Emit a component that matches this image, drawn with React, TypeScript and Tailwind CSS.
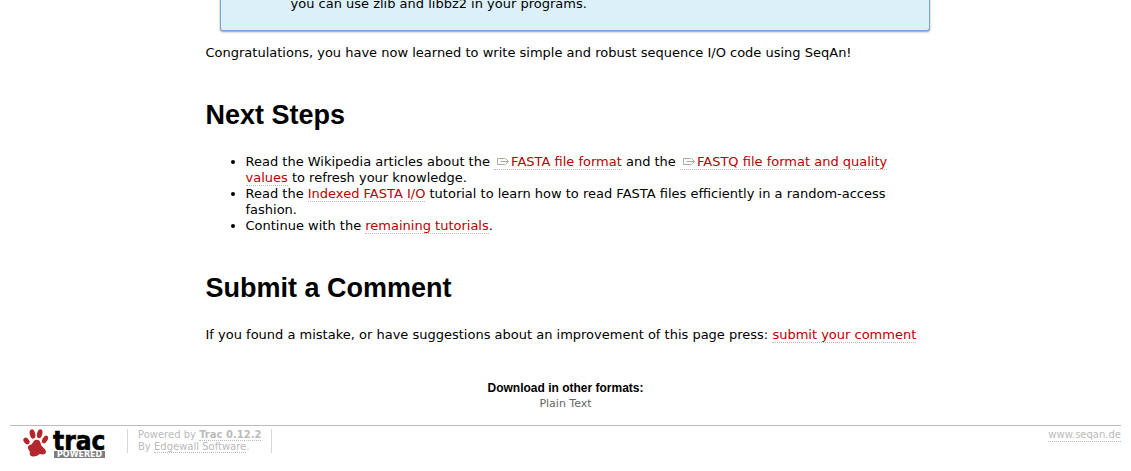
import type { ReactNode } from "react";

function WikiLink({ children, external }: { children: ReactNode; external?: boolean }) {
  return (
    <a href="#" className="border-b border-dotted border-[#bbbbbb] text-[#bb0000] hover:bg-[#eeeeee]">
      {external && (
        <svg className="mr-px ml-0.5 inline-block h-[9px] w-[14px] align-baseline" viewBox="0 0 14 9" fill="none" stroke="#a3ad9c" aria-hidden="true">
          <path d="M8.500 2v-.5h-7v6h7V7" />
          <path d="M4.500 4.500h8M9.500 1.500l3 3-3 3" />
        </svg>
      )}
      {children}
    </a>
  );
}

function TracLogo() {
  return (
    <a href="#" aria-label="Trac Powered" className="block">
      <svg className="block h-[30px] w-[84px]" viewBox="0 0 84 30" aria-hidden="true">
        <g fill="#b3262b">
          <ellipse cx="4.500" cy="12" rx="2.600" ry="3.800" transform="rotate(-35 4.500 12)" />
          <ellipse cx="10.500" cy="5" rx="2.700" ry="4.700" transform="rotate(-14 10.500 5)" />
          <ellipse cx="17.700" cy="4.700" rx="2.600" ry="4.600" transform="rotate(14 17.700 4.700)" />
          <ellipse cx="23" cy="10.500" rx="2.500" ry="4.200" transform="rotate(32 23 10.500)" />
          <path d="M14.300 10.700c2.500-.3 4 1.300 4.300 3.600.3 2 1 3 2.600 4.300 2 1.800 3.400 3.400 2.500 5.400-.9 1.700-2.900 1.500-4.500 1.200-1.300-.3-2 .1-3 .9-1.300 1.200-2.700 1-4.300 1.300-1.700.3-3.700-.2-4.100-1.800-.3-1.400.4-2.400-.3-3.600-.8-1.400-2.200-2.600-1.500-4.400.7-1.600 2.600-1.500 3.800-2.600 1.500-1.500 1.900-4 4.500-4.300z" />
        </g>
        <text x="31" y="21" fontFamily="DejaVu Sans Condensed, DejaVu Sans, sans-serif" fontWeight="700" fontSize="26" fill="#000" stroke="#000" strokeWidth="0.6">trac</text>
        <rect x="32" y="22" width="51" height="7" fill="#7e7e7e" />
        <text x="35" y="28" fontFamily="DejaVu Sans, sans-serif" fontWeight="700" fontSize="8" fill="#fff">POWERED</text>
      </svg>
    </a>
  );
}

const heading = "text-[27px] leading-8 font-bold font-['Liberation_Sans',Arial,sans-serif]";

export default function App() {
  return (
    <div className="bg-white px-2.5 pb-3 font-['DejaVu_Sans',Verdana,sans-serif] text-[13px] leading-4 text-black">
      <main className="mx-auto w-full max-w-[720px]">
        <div className="-mr-1 ml-3.5 rounded-b-[3px] border border-t-0 border-[#7aa6d6] bg-[#dcf0fa] pb-[18px] pl-[70px] shadow-[0_1px_2px_rgba(0,0,0,0.4)]">
          <p className="-mt-1">you can use zlib and libbz2 in your programs.</p>
        </div>
        <p className="mt-3.5">Congratulations, you have now learned to write simple and robust sequence I/O code using SeqAn!</p>

        <h1 className={`${heading} mt-[38px]`}>Next Steps</h1>
        <ul className="mt-[23px] list-disc pl-10">
          <li>
            Read the Wikipedia articles about the <WikiLink external>FASTA file format</WikiLink> and the{" "}
            <WikiLink external>FASTQ file format and quality values</WikiLink> to refresh your knowledge.
          </li>
          <li>
            Read the <WikiLink>Indexed FASTA I/O</WikiLink> tutorial to learn how to read FASTA files efficiently in a random-access fashion.
          </li>
          <li>
            Continue with the <WikiLink>remaining tutorials</WikiLink>.
          </li>
        </ul>

        <h1 className={`${heading} mt-[38px]`}>Submit a Comment</h1>
        <p className="mt-[23px] -mr-6">
          If you found a mistake, or have suggestions about an improvement of this page press: <WikiLink>submit your comment</WikiLink>
        </p>
      </main>

      <section className="mt-[37px] text-center">
        <h3 className="font-['Liberation_Sans',Arial,sans-serif] text-[12px] leading-4 font-bold">Download in other formats:</h3>
        <a href="#" className="block text-[11px] leading-4 text-[#666666]">Plain Text</a>
      </section>

      <footer className="mt-[13px] flex items-start border-t border-[#bbbbbb] pt-[3px] text-[10px] leading-3 text-[#bbbbbb]">
        <div className="ml-3"><TracLogo /></div>
        <p className="ml-[21px] h-6 border-x border-[#d7d7d7] px-2.5">
          Powered by <a href="#" className="border-b border-dotted border-[#bbbbbb] font-bold">Trac 0.12.2</a>
          <br />
          By <a href="#" className="border-b border-dotted border-[#bbbbbb]">Edgewall Software</a>.
        </p>
        <a href="#" className="ml-auto border-b border-dotted border-[#bbbbbb]">www.seqan.de</a>
      </footer>
    </div>
  );
}
